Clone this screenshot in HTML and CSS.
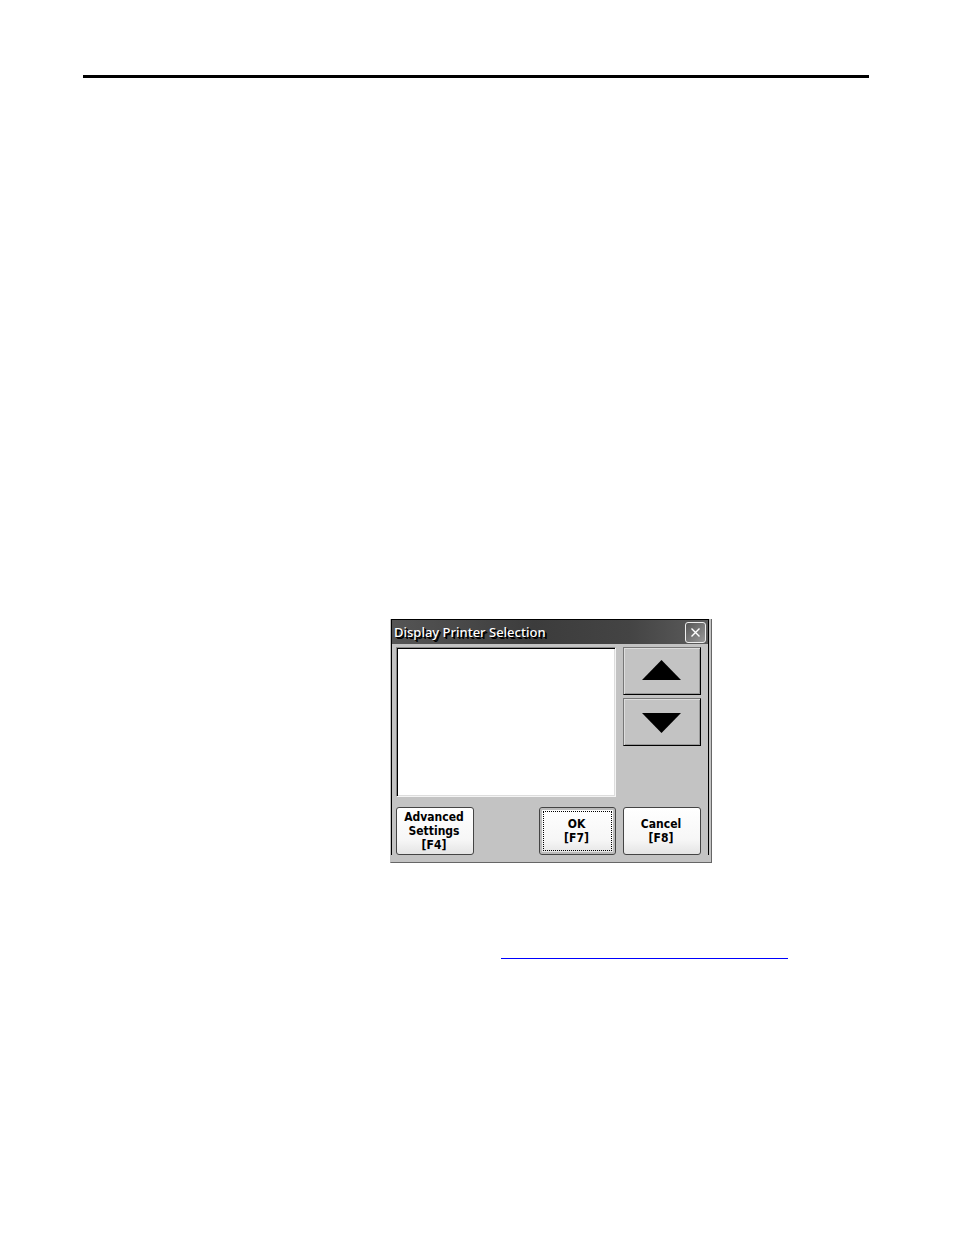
FILE: index.html
```html
<!DOCTYPE html>
<html lang="en">
<head>
  <meta charset="UTF-8" />
  <meta name="viewport" content="width=device-width, initial-scale=1.0" />
  <title>Display Printer Selection</title>
  <link rel="stylesheet" href="styles.css">
</head>
<body>
  <hr class="page-rule">

  <main class="content">
    <section class="dialog" aria-labelledby="dialog-title">
      <div class="frame">
        <header class="titlebar">
          <h1 id="dialog-title">Display Printer Selection</h1>
          <button class="close" type="button" aria-label="Close">
            <svg width="9" height="9" viewBox="0 0 9 9"><path d="M0.5 0.5L8.5 8.5M8.5 0.5L0.5 8.5" /></svg>
          </button>
        </header>

        <div class="panel">
          <div class="printers" role="listbox" aria-label="Printers" tabindex="0"></div>
          <div class="arrows">
            <button class="arrow" type="button" aria-label="Up">
              <svg width="40" height="20" viewBox="0 0 40 20"><path d="M19.5 0L39 20H0Z" /></svg>
            </button>
            <button class="arrow" type="button" aria-label="Down">
              <svg width="40" height="20" viewBox="0 0 40 20"><path d="M0 0H39L19.5 20Z" /></svg>
            </button>
          </div>
        </div>

        <div class="actions">
          <button class="key" type="button">Advanced<br>Settings<br>[F4]</button>
          <button class="key key-default" type="button"><span class="focus">OK<br>[F7]</span></button>
          <button class="key" type="button">Cancel<br>[F8]</button>
        </div>
      </div>
    </section>

    <a class="reference" href="#dialog-title" aria-label="Printer settings"></a>
  </main>
</body>
</html>
```

FILE: styles.css
```css
* {
  box-sizing: border-box;
}
body {
  margin: 0;
  background-color: white;
  color: black;
  font-family: "DejaVu Sans Condensed", "DejaVu Sans", sans-serif;
  font-size: 12px;
  line-height: 14px;
}
button {
  margin: 0;
  padding: 0;
  color: black;
  font: inherit;
}
svg {
  display: block;
}
.page-rule {
  height: 3px;
  margin: 75px 85px 0 83px;
  border: none;
  background-color: black;
}
.content {
  padding: 541px 85px 0 390px;
}
.dialog {
  width: 322px;
  padding: 0 2px 7px 0;
  border: 1px solid #666;
  border-top: none;
  border-left-color: #c3c3c3;
  background-color: #c3c3c3;
}
.frame {
  border: 1px solid black;
  border-bottom: none;
}

/* title bar */
.titlebar {
  display: flex;
  align-items: center;
  justify-content: space-between;
  height: 24px;
  padding: 0 2px;
  background: linear-gradient(to right, #555, #3c3c3c 45%, #444 75%, #5c5c5c);
}
.titlebar h1 {
  margin: 0;
  color: white;
  font-family: "Noto Sans", sans-serif;
  font-size: 13px;
  font-weight: 500;
  line-height: 18px;
  text-shadow: 1px 1px 0 black, 2px 2px 0 black;
}
.close {
  display: flex;
  align-items: center;
  justify-content: center;
  width: 21px;
  height: 21px;
  border: 1px solid #eee;
  border-radius: 3px;
  background: linear-gradient(135deg, #555, #999);
}
.close path {
  stroke: white;
  stroke-width: 1.4;
}

/* list and scroll buttons */
.panel {
  display: flex;
  gap: 7px;
  padding: 3px 7px 0 4px;
}
.printers {
  flex: 1;
  height: 150px;
  border: 1px solid #888;
  border-right-color: #f4f4f4;
  border-bottom-color: #f4f4f4;
  background-color: white;
  box-shadow: inset 1px 1px 0 black, inset -1px -1px 0 #ddd;
}
.arrows {
  display: flex;
  flex-direction: column;
  gap: 3px;
}
.arrow {
  display: flex;
  align-items: center;
  justify-content: center;
  width: 78px;
  height: 48px;
  padding-bottom: 2px;
  border: 1px solid black;
  border-top-color: #777;
  border-left-color: #777;
  background-color: #c3c3c3;
  box-shadow: inset 1px 1px 0 #ddd, inset -1px -1px 0 #999;
}
.arrow + .arrow {
  padding: 2px 0 0;
}

/* function keys */
.actions {
  display: flex;
  gap: 7px;
  padding: 10px 7px 0 4px;
}
.key {
  width: 78px;
  height: 48px;
  padding-right: 2px;
  border: 1px solid #444;
  border-radius: 3px;
  background: linear-gradient(#fff, #f6f6f6 70%, #e4e4e4);
  font-weight: 700;
}
.key-default {
  width: 77px;
  margin-left: auto;
  padding: 3px;
  box-shadow: inset 0 0 0 2px #bbb;
}
.focus {
  display: flex;
  flex-direction: column;
  justify-content: center;
  height: 100%;
  padding-right: 2px;
  border: 1px dotted black;
}

.reference {
  display: block;
  width: 287px;
  height: 96px;
  margin-left: 111px;
  border-bottom: 1px solid #0000ff;
}
```
